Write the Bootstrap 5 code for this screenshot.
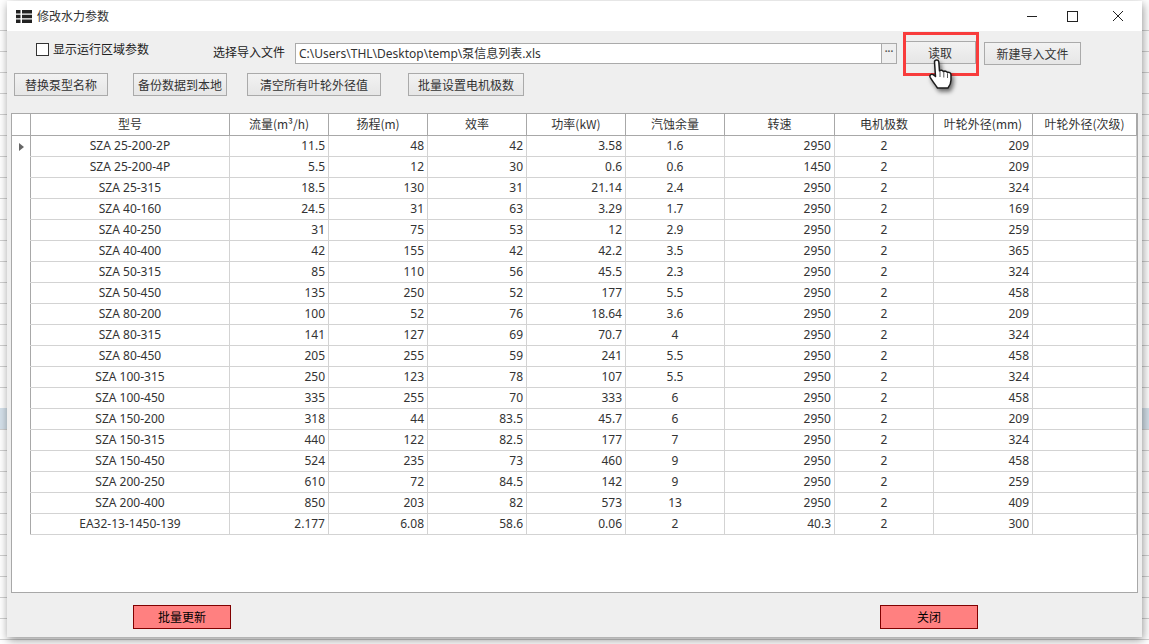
<!DOCTYPE html>
<html lang="zh">
<head>
<meta charset="utf-8">
<title>修改水力参数</title>
<link href="https://cdn.jsdelivr.net/npm/bootstrap@5.3.0/dist/css/bootstrap.min.css" rel="stylesheet">
<style>
html,body{margin:0;height:644px;overflow:hidden}
body{font-family:Tahoma,"Noto Sans","Noto Sans CJK SC",sans-serif;font-size:12px;color:#333;
 background:
  linear-gradient(#d4e0ea,#d4e0ea) 0 408px/100% 21px no-repeat,
  repeating-linear-gradient(#fff 0 20px,#d0d0d0 20px 21px) 0 10px,
  #fff}
.desk{position:relative;width:1149px;height:644px;padding:1px 7px 0}
.wnd{width:1135px;height:636px;background:#efefef;box-shadow:1px 3px 9px rgba(0,0,0,.42)}
.ttl{height:30px;background:#fff;color:#333;font-size:12px;font-family:"Noto Sans CJK SC",sans-serif}
.ttl-ic{margin-left:9px;margin-right:5px}
.ctl{height:30px;display:flex;align-items:center;justify-content:center}
.ctl-a{width:36px}.ctl-b{width:44px}.ctl-c{width:48px}
.bar1{height:42px;padding:0 0 0 29px}
.chk{width:13px;height:13px;border:1px solid #333;background:#fff;margin-right:4px;margin-top:-4px}
.lbl1{width:160px;font-family:"Noto Sans CJK SC",sans-serif;font-size:12px;color:#222;margin-top:-5px}
.lbl2{width:82px;font-family:"Noto Sans CJK SC",sans-serif;font-size:12px;color:#222;margin-top:1px}
.path{width:586px;height:21px;background:#fff;border:1px solid #aaa;border-right:0;padding-left:3px;line-height:19px;color:#333;white-space:nowrap;margin-top:3px}
.brws{width:16px;height:21px;border:1px solid #aaa;background:#efefef;color:#555;font-size:10px;line-height:14px;text-align:center;font-weight:700;margin-top:3px}
.btn.wb{--bs-btn-border-radius:0;height:23px;padding:0;border:1px solid #aaa;color:#333;font-size:12px;line-height:21px;
 font-family:"Noto Sans CJK SC",sans-serif;background:linear-gradient(#f2f2f2,#e6e6e6)}
.w97{width:97px;margin-top:3px}.w94{width:94px}.w134{width:134px}.w116{width:116px}.w73{width:72px}
.read{margin-left:7px;margin-right:8px;margin-top:2px}
.bar2{height:40px;padding-left:7px}
.gapa{margin-right:25px}.gapb{margin-right:20px}.gapc{margin-right:27px}
.grid-box{margin-left:4px;width:1127px;height:481px;background:#fff;border:1px solid #a8a8a8;overflow:hidden}
table.gr{table-layout:fixed;width:1125px;margin:0;border-collapse:separate;border-spacing:0;font-size:12px;color:#333}
table.gr th,table.gr td{height:21px;padding:0 3px;line-height:20px;border:solid #d3d3d3;border-width:0 1px 1px 0;font-weight:400;white-space:nowrap;overflow:hidden;box-sizing:border-box}
table.gr td:first-child,table.gr th:first-child{border-right-color:#a8a8a8;padding:0}
table.gr thead th{height:22px;border-color:#a8a8a8;text-align:center;font-family:"Noto Sans CJK SC","Noto Sans",sans-serif;font-size:12px;background:#fff}
table.gr td.rs{border-bottom-color:#fff}
table.gr td.r{text-align:right}
table.gr td.c{text-align:center}
.foot{height:44px;padding-left:126px;padding-top:4px}
.btn.rb{--bs-btn-border-radius:0;width:98px;height:24px;padding:0;border:1px solid #800000;background:#ff8080;color:#000;font-size:12px;line-height:22px;font-family:"Noto Sans CJK SC",sans-serif}
.ml{margin-left:649px}
.red{position:absolute;left:903px;top:32px;width:76px;height:44px;border:3px solid #f83c3c;pointer-events:none}
.hand{position:absolute;left:929px;top:59px;filter:drop-shadow(2px 3px 2px rgba(0,0,0,.55))}
</style>
</head>
<body>
<div class="desk">
<div class="wnd d-flex flex-column">
 <div class="ttl d-flex align-items-center">
  <svg class="ttl-ic" width="16" height="13" viewBox="0 0 16 13"><path fill="#222" d="M0 0h4.5v3.6H0zM6 0h10v3.6H6zM0 4.7h4.5v3.6H0zM6 4.7h10v3.6H6zM0 9.4h4.5V13H0zM6 9.4h10V13H6z"/></svg>
  <span class="flex-grow-1">修改水力参数</span>
  <div class="ctl ctl-a"><svg width="11" height="11"><path d="M0 5.5h10" stroke="#222" fill="none"/></svg></div>
  <div class="ctl ctl-b"><svg width="11" height="11"><rect x=".5" y=".5" width="10" height="10" stroke="#222" fill="none"/></svg></div>
  <div class="ctl ctl-c"><svg width="12" height="12"><path d="M1 1l10 10M11 1L1 11" stroke="#222" fill="none"/></svg></div>
 </div>
 <div class="bar1 d-flex align-items-center">
  <div class="chk"></div>
  <div class="lbl1">显示运行区域参数</div>
  <div class="lbl2">选择导入文件</div>
  <div class="path">C:\Users\THL\Desktop\temp\泵信息列表.xls</div>
  <div class="brws">···</div>
  <button type="button" class="btn wb w73 read">读取</button>
  <button type="button" class="btn wb w97">新建导入文件</button>
 </div>
 <div class="bar2 d-flex align-items-start">
  <button type="button" class="btn wb w94 gapa">替换泵型名称</button>
  <button type="button" class="btn wb w94 gapb">备份数据到本地</button>
  <button type="button" class="btn wb w134 gapc">清空所有叶轮外径值</button>
  <button type="button" class="btn wb w116">批量设置电机极数</button>
 </div>
 <div class="grid-box">
  <table class="gr">
   <colgroup><col style="width:19px"><col style="width:199px"><col style="width:99px"><col style="width:99px"><col style="width:99px"><col style="width:99px"><col style="width:99px"><col style="width:110px"><col style="width:99px"><col style="width:99px"><col style="width:104px"></colgroup>
   <thead><tr><th></th><th>型号</th><th>流量(m³/h)</th><th>扬程(m)</th><th>效率</th><th>功率(kW)</th><th>汽蚀余量</th><th>转速</th><th>电机极数</th><th>叶轮外径(mm)</th><th>叶轮外径(次级)</th></tr></thead>
   <tbody>
<tr><td class="rs c"><svg width="5" height="8"><path d="M0 0l5 4-5 4z" fill="#666"/></svg></td><td class="c">SZA 25-200-2P</td><td class="r">11.5</td><td class="r">48</td><td class="r">42</td><td class="r">3.58</td><td class="c">1.6</td><td class="r">2950</td><td class="c">2</td><td class="r">209</td><td></td></tr>
<tr><td class="rs"></td><td class="c">SZA 25-200-4P</td><td class="r">5.5</td><td class="r">12</td><td class="r">30</td><td class="r">0.6</td><td class="c">0.6</td><td class="r">1450</td><td class="c">2</td><td class="r">209</td><td></td></tr>
<tr><td class="rs"></td><td class="c">SZA 25-315</td><td class="r">18.5</td><td class="r">130</td><td class="r">31</td><td class="r">21.14</td><td class="c">2.4</td><td class="r">2950</td><td class="c">2</td><td class="r">324</td><td></td></tr>
<tr><td class="rs"></td><td class="c">SZA 40-160</td><td class="r">24.5</td><td class="r">31</td><td class="r">63</td><td class="r">3.29</td><td class="c">1.7</td><td class="r">2950</td><td class="c">2</td><td class="r">169</td><td></td></tr>
<tr><td class="rs"></td><td class="c">SZA 40-250</td><td class="r">31</td><td class="r">75</td><td class="r">53</td><td class="r">12</td><td class="c">2.9</td><td class="r">2950</td><td class="c">2</td><td class="r">259</td><td></td></tr>
<tr><td class="rs"></td><td class="c">SZA 40-400</td><td class="r">42</td><td class="r">155</td><td class="r">42</td><td class="r">42.2</td><td class="c">3.5</td><td class="r">2950</td><td class="c">2</td><td class="r">365</td><td></td></tr>
<tr><td class="rs"></td><td class="c">SZA 50-315</td><td class="r">85</td><td class="r">110</td><td class="r">56</td><td class="r">45.5</td><td class="c">2.3</td><td class="r">2950</td><td class="c">2</td><td class="r">324</td><td></td></tr>
<tr><td class="rs"></td><td class="c">SZA 50-450</td><td class="r">135</td><td class="r">250</td><td class="r">52</td><td class="r">177</td><td class="c">5.5</td><td class="r">2950</td><td class="c">2</td><td class="r">458</td><td></td></tr>
<tr><td class="rs"></td><td class="c">SZA 80-200</td><td class="r">100</td><td class="r">52</td><td class="r">76</td><td class="r">18.64</td><td class="c">3.6</td><td class="r">2950</td><td class="c">2</td><td class="r">209</td><td></td></tr>
<tr><td class="rs"></td><td class="c">SZA 80-315</td><td class="r">141</td><td class="r">127</td><td class="r">69</td><td class="r">70.7</td><td class="c">4</td><td class="r">2950</td><td class="c">2</td><td class="r">324</td><td></td></tr>
<tr><td class="rs"></td><td class="c">SZA 80-450</td><td class="r">205</td><td class="r">255</td><td class="r">59</td><td class="r">241</td><td class="c">5.5</td><td class="r">2950</td><td class="c">2</td><td class="r">458</td><td></td></tr>
<tr><td class="rs"></td><td class="c">SZA 100-315</td><td class="r">250</td><td class="r">123</td><td class="r">78</td><td class="r">107</td><td class="c">5.5</td><td class="r">2950</td><td class="c">2</td><td class="r">324</td><td></td></tr>
<tr><td class="rs"></td><td class="c">SZA 100-450</td><td class="r">335</td><td class="r">255</td><td class="r">70</td><td class="r">333</td><td class="c">6</td><td class="r">2950</td><td class="c">2</td><td class="r">458</td><td></td></tr>
<tr><td class="rs"></td><td class="c">SZA 150-200</td><td class="r">318</td><td class="r">44</td><td class="r">83.5</td><td class="r">45.7</td><td class="c">6</td><td class="r">2950</td><td class="c">2</td><td class="r">209</td><td></td></tr>
<tr><td class="rs"></td><td class="c">SZA 150-315</td><td class="r">440</td><td class="r">122</td><td class="r">82.5</td><td class="r">177</td><td class="c">7</td><td class="r">2950</td><td class="c">2</td><td class="r">324</td><td></td></tr>
<tr><td class="rs"></td><td class="c">SZA 150-450</td><td class="r">524</td><td class="r">235</td><td class="r">73</td><td class="r">460</td><td class="c">9</td><td class="r">2950</td><td class="c">2</td><td class="r">458</td><td></td></tr>
<tr><td class="rs"></td><td class="c">SZA 200-250</td><td class="r">610</td><td class="r">72</td><td class="r">84.5</td><td class="r">142</td><td class="c">9</td><td class="r">2950</td><td class="c">2</td><td class="r">259</td><td></td></tr>
<tr><td class="rs"></td><td class="c">SZA 200-400</td><td class="r">850</td><td class="r">203</td><td class="r">82</td><td class="r">573</td><td class="c">13</td><td class="r">2950</td><td class="c">2</td><td class="r">409</td><td></td></tr>
<tr><td class="rs"></td><td class="c">EA32-13-1450-139</td><td class="r">2.177</td><td class="r">6.08</td><td class="r">58.6</td><td class="r">0.06</td><td class="c">2</td><td class="r">40.3</td><td class="c">2</td><td class="r">300</td><td></td></tr>
   </tbody>
  </table>
 </div>
 <div class="foot d-flex align-items-center">
  <button type="button" class="btn rb">批量更新</button>
  <button type="button" class="btn rb ml">关闭</button>
 </div>
</div>
<div class="red"></div>
<svg class="hand" width="24" height="31" viewBox="0 0 24 31"><path d="M5.5 3c-.2-2.400 4-2.600 4.300-.2l.7 9.200c1-1 3-1 4 .8 1-1 3-1 4 .8 1.200-.6 3.500 0 3.500 2.200v5.200c0 3-1.200 5.800-3 8H8.500C6.500 26 3 21.500 1.200 18.300c-1-2 1-4 3-2.600l2.300 1.800z" fill="#fff" stroke="#1c1c1c" stroke-width="1.500" stroke-linejoin="round"/><path d="M11 12.500v5.500M14.800 13.500v5M18.500 14.500v4.500" stroke="#555" fill="none"/></svg>
</div>
<script src="https://cdn.jsdelivr.net/npm/bootstrap@5.3.0/dist/js/bootstrap.bundle.min.js"></script>
</body>
</html>
